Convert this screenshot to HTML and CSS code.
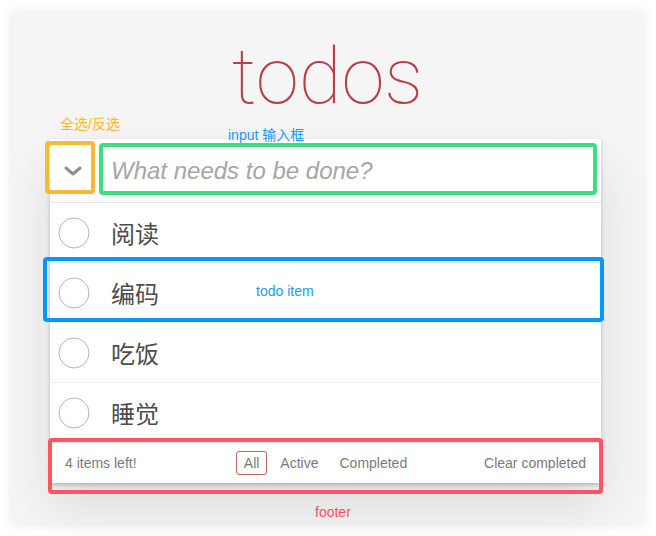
FILE: index.html
```html
<!DOCTYPE html>
<html lang="zh">
<head>
<meta charset="utf-8">
<title>todos</title>
<link rel="stylesheet" href="styles.css">
</head>
<body>
<div class="frame">
  <h1 class="title">todos</h1>
  <section class="todoapp">
    <header class="header">
      <label class="toggle-all">
        <svg width="18" height="10" viewBox="0 0 18 10"><polyline points="2,2 9,8 16,2" fill="none" stroke="#8e8e8e" stroke-width="3" stroke-linecap="round" stroke-linejoin="round"/></svg>
      </label>
      <input class="new-todo" placeholder="What needs to be done?">
    </header>
    <ul class="todo-list">
      <li class="todo"><span class="check"><svg width="32" height="32" viewBox="0 0 32 32"><circle cx="16" cy="16" r="15" fill="none" stroke="#b5b5b5" stroke-width="1"/></svg></span><span class="todo-text">阅读</span></li>
      <li class="todo"><span class="check"><svg width="32" height="32" viewBox="0 0 32 32"><circle cx="16" cy="16" r="15" fill="none" stroke="#b5b5b5" stroke-width="1"/></svg></span><span class="todo-text">编码</span></li>
      <li class="todo"><span class="check"><svg width="32" height="32" viewBox="0 0 32 32"><circle cx="16" cy="16" r="15" fill="none" stroke="#b5b5b5" stroke-width="1"/></svg></span><span class="todo-text">吃饭</span></li>
      <li class="todo"><span class="check"><svg width="32" height="32" viewBox="0 0 32 32"><circle cx="16" cy="16" r="15" fill="none" stroke="#b5b5b5" stroke-width="1"/></svg></span><span class="todo-text">睡觉</span></li>
    </ul>
    <footer class="footer">
      <span class="count">4 items left!</span>
      <ul class="filters">
        <li><a class="filter selected">All</a></li>
        <li><a class="filter">Active</a></li>
        <li><a class="filter">Completed</a></li>
      </ul>
      <span class="clear">Clear completed</span>
    </footer>
  </section>

  <div class="note box-orange"></div>
  <div class="note box-green"></div>
  <div class="note box-blue"></div>
  <div class="note box-red"></div>
  <span class="label label-orange">全选/反选</span>
  <span class="label label-input">input 输入框</span>
  <span class="label label-item">todo item</span>
  <span class="label label-footer">footer</span>
</div>
</body>
</html>
```
FILE: styles.css
```css
html, body {
  margin: 0;
  padding: 0;
  background: #ffffff;
}
body {
  font-family: "Liberation Sans", "Noto Sans CJK SC", Arial, sans-serif;
  overflow: hidden;
}
.frame {
  position: relative;
  margin: 12px 12px 12px 11px;
  height: 512px;
  background: #f5f5f5;
  box-shadow: 0 0 10px rgba(0, 0, 0, 0.09);
}
.title {
  margin: 0;
  padding-top: 25px;
  height: 80px;
  margin-bottom: 22px;
  font-family: Roboto, Inter, "Liberation Sans", sans-serif;
  font-weight: 100;
  font-size: 78px;
  line-height: 80px;
  text-align: center;
  color: #b83f45;
}
.todoapp {
  position: relative;
  margin-left: 39px;
  width: 551px;
  background: #fff;
  box-shadow: 0 2px 4px rgba(0, 0, 0, 0.2), 0 25px 50px rgba(0, 0, 0, 0.1);
}
.header {
  display: flex;
  align-items: center;
  height: 63px;
  box-shadow: inset 0 -2px 1px rgba(0, 0, 0, 0.03);
}
.toggle-all {
  width: 45px;
  height: 63px;
  display: flex;
  align-items: center;
  justify-content: center;
}
.toggle-all svg { display: block; }
.new-todo {
  flex: 1;
  height: 63px;
  box-sizing: border-box;
  padding: 0 16px;
  border: none;
  outline: none;
  background: transparent;
  font-family: "Liberation Sans", Arial, sans-serif;
  font-size: 24px;
  color: #4d4d4d;
}
.new-todo::placeholder {
  font-style: italic;
  color: #a6a6a6;
}
.todo-list {
  list-style: none;
  margin: 0;
  padding: 0;
  border-top: 1px solid #e6e6e6;
}
.todo {
  display: flex;
  align-items: center;
  height: 59px;
  border-bottom: 1px solid #ededed;
}
.todo:last-child { border-bottom: none; }
.check {
  width: 47px;
  display: flex;
  justify-content: center;
}
.check svg { display: block; }
.todo-text {
  padding-left: 14px;
  font-family: "Noto Sans CJK SC", sans-serif;
  font-size: 24px;
  color: #4d4d4d;
}
.footer {
  position: relative;
  display: grid;
  grid-template-columns: 1fr auto 1fr;
  align-items: center;
  height: 40px;
  padding: 0 15px;
  border-top: 1px solid #e6e6e6;
  font-size: 14px;
  color: #7a7a7a;
}
.footer::before {
  content: "";
  position: absolute;
  left: 0;
  right: 0;
  bottom: 0;
  height: 50px;
  overflow: hidden;
  box-shadow: 0 1px 1px rgba(0, 0, 0, 0.2), 0 8px 0 -3px #f6f6f6, 0 9px 1px -3px rgba(0, 0, 0, 0.2), 0 16px 0 -6px #f6f6f6, 0 17px 2px -6px rgba(0, 0, 0, 0.2);
  z-index: -1;
}
.count { justify-self: start; }
.filters {
  list-style: none;
  margin: 0;
  padding: 0;
  display: flex;
}
.filter {
  display: block;
  margin: 3px;
  padding: 3px 7px;
  border: 1px solid transparent;
  border-radius: 3px;
  color: #7a7a7a;
  line-height: 16px;
}
.filters li + li .filter { margin-left: 2px; }
.filter.selected { border-color: rgba(175, 47, 47, 0.75); }
.clear { justify-self: end; }

.note {
  position: absolute;
  box-sizing: border-box;
  border: 4px solid;
  border-radius: 4px;
}
.box-orange { left: 34px; top: 129px; width: 50px; height: 53px; border-color: #fdb836; }
.box-green { left: 88px; top: 131px; width: 498px; height: 52px; border-color: #3be080; }
.box-blue { left: 32px; top: 245px; width: 561px; height: 65px; border-color: #0299f7; }
.box-red { left: 37px; top: 426px; width: 555px; height: 56px; border-color: #ff5263; }
.label {
  position: absolute;
  font-size: 14px;
  line-height: 16px;
  white-space: nowrap;
}
.label-orange { left: 49px; top: 104px; color: #fdb42f; }
.label-input { left: 217px; top: 115px; color: #1a9bf2; }
.label-item { left: 245px; top: 271px; color: #1a9bf2; }
.label-footer { left: 304px; top: 492px; color: #ff4f5e; }
```
